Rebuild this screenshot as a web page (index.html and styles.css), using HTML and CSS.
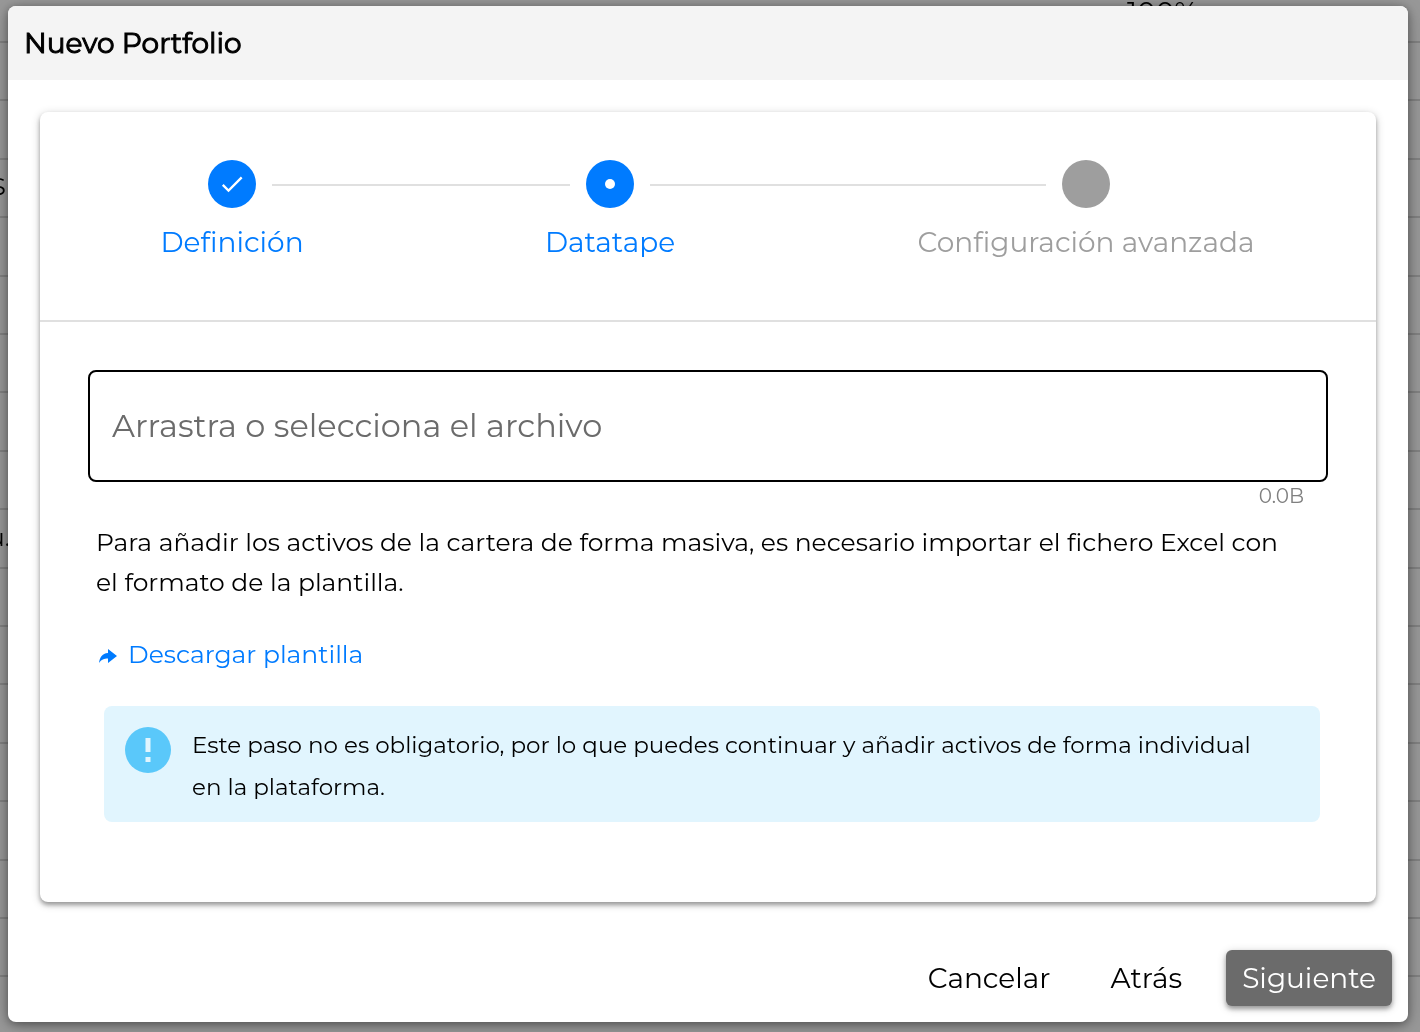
FILE: index.html
```html
<!DOCTYPE html>
<html lang="es">
<head>
  <meta charset="utf-8">
  <meta name="viewport" content="width=device-width, initial-scale=1">
  <title>Nuevo Portfolio</title>
  <link rel="stylesheet" href="styles.css">
</head>
<body>
  <div class="page-behind" aria-hidden="true">
    <table class="grid-table">
      <tbody>
        <tr><td></td><td class="percent">100%</td></tr>
        <tr><td></td><td></td></tr>
        <tr><td></td><td></td></tr>
        <tr><td class="cut"><span>S</span></td><td></td></tr>
        <tr><td></td><td></td></tr>
        <tr><td></td><td></td></tr>
        <tr><td></td><td></td></tr>
        <tr><td></td><td></td></tr>
        <tr><td></td><td></td></tr>
        <tr><td class="cut cut-wide"><span>u.</span></td><td></td></tr>
        <tr><td></td><td></td></tr>
        <tr><td></td><td></td></tr>
        <tr><td></td><td></td></tr>
        <tr><td></td><td></td></tr>
        <tr><td></td><td></td></tr>
        <tr><td></td><td></td></tr>
        <tr><td></td><td></td></tr>
      </tbody>
    </table>
  </div>

  <main class="dialog" role="dialog" aria-labelledby="dialog-title">
    <header class="dialog-header">
      <h1 class="dialog-title" id="dialog-title">Nuevo Portfolio</h1>
    </header>

    <section class="card">
      <ol class="stepper">
        <li class="step step-first step-done">
          <div class="step-track">
            <span class="step-dot">
              <svg width="28" height="28" viewBox="0 0 24 24" fill="currentColor" aria-hidden="true"><path d="M9 16.2 4.800 12l-1.400 1.400L9 19 21 7l-1.400-1.400z"/></svg>
            </span>
          </div>
          <span class="step-label">Definición</span>
        </li>
        <li class="step step-second step-active" aria-current="step">
          <div class="step-track">
            <span class="step-dot">
              <svg width="24" height="24" viewBox="0 0 24 24" fill="currentColor" aria-hidden="true"><circle cx="12" cy="12" r="5"/></svg>
            </span>
          </div>
          <span class="step-label">Datatape</span>
        </li>
        <li class="step step-third">
          <div class="step-track"><span class="step-dot"></span></div>
          <span class="step-label">Configuración avanzada</span>
        </li>
      </ol>

      <div class="card-body">
        <label class="dropzone">
          <span class="dropzone-text">Arrastra o selecciona el archivo</span>
          <input class="dropzone-input" type="file">
        </label>
        <p class="counter">0.0B</p>
        <p class="intro">Para añadir los activos de la cartera de forma masiva, es necesario importar el fichero Excel con el formato de la plantilla.</p>
        <a class="download" href="#">
          <svg class="download-icon" width="24" height="24" viewBox="0 0 24 24" fill="currentColor" aria-hidden="true"><path d="M12 7v4C6 11.500 3.500 16 3 21c2.500-3.500 5-4.500 9-4.500V21l9-7z"/></svg>
          <span>Descargar plantilla</span>
        </a>
        <div class="notice">
          <svg class="notice-icon" width="48" height="48" viewBox="0 0 48 48" aria-hidden="true">
            <circle cx="24" cy="24" r="23" fill="#5ac8fa"/>
            <path d="M21.500 12h5v14h-5zM21.500 31h5v5h-5z" fill="#e1f5fe"/>
          </svg>
          <p class="notice-text">Este paso no es obligatorio, por lo que puedes continuar y añadir activos de forma individual en la plataforma.</p>
        </div>
      </div>
    </section>

    <footer class="actions">
      <button class="button" type="button">Cancelar</button>
      <button class="button" type="button">Atrás</button>
      <button class="button button-primary" type="button">Siguiente</button>
    </footer>
  </main>
</body>
</html>
```
FILE: styles.css
```css
* {
  box-sizing: border-box;
}

body {
  margin: 0;
  min-height: 100vh;
  padding: 6px 12px 10px 8px;
  background: #999;
  color: #000;
  font-family: Montserrat, Inter, sans-serif;
  font-size: 25px;
}

h1,
p,
ol {
  margin: 0;
  padding: 0;
}

/* Table of portfolios that stays behind the dialog */
.page-behind {
  position: fixed;
  inset: 0;
  overflow: hidden;
}

.grid-table {
  width: 100%;
  border-collapse: collapse;
  table-layout: fixed;
  line-height: 32px;
}

.grid-table td {
  height: 58px;
  padding: 0 0 4px;
  border-bottom: 2px solid #828282;
}

.grid-table tr:nth-child(5n) td,
.grid-table tr:nth-child(5n + 3) td {
  height: 59px;
}

.grid-table tr:first-child td {
  height: 42px;
}

.grid-table .percent {
  padding-left: 417px;
  vertical-align: top;
  font-size: 28px;
  line-height: 24px;
}

.cut span {
  display: flex;
  justify-content: flex-end;
  width: 6px;
}

.cut-wide span {
  width: 10px;
}

.dialog {
  position: relative;
  min-height: calc(100vh - 16px);
  overflow: hidden;
  border-radius: 8px;
  background: #fff;
  box-shadow: 0 2px 10px rgba(0, 0, 0, 0.4), 0 4px 24px rgba(0, 0, 0, 0.2);
}

.dialog-header {
  padding: 17px 16px;
  background: #f4f4f4;
}

.dialog-title {
  font-size: 28px;
  font-weight: 400;
  line-height: 40px;
  -webkit-text-stroke: 1px currentColor;
}

.card {
  margin: 32px 32px 0;
  border-radius: 8px;
  box-shadow: 0 2px 10px rgba(0, 0, 0, 0.2), 0 3px 4px rgba(0, 0, 0, 0.3);
}

.stepper {
  display: flex;
  overflow: hidden;
  padding: 48px 0;
  border-bottom: 2px solid #e0e0e0;
  list-style: none;
}

.step {
  min-width: 0;
  color: #9e9e9e;
  text-align: center;
}

.step-first {
  flex: 384 1 0;
}

.step-second {
  flex: 372 1 0;
}

.step-third {
  flex: 580 1 0;
}

.step-done,
.step-active {
  color: #007bff;
}

.step-track {
  display: flex;
  align-items: center;
  gap: 16px;
}

.step-track::before,
.step-track::after {
  content: "";
  flex: 1;
  height: 2px;
  margin-top: 2px;
  background: #e0e0e0;
}

.step:first-child .step-track::before,
.step:last-child .step-track::after {
  background: none;
}

.step-dot {
  display: flex;
  align-items: center;
  justify-content: center;
  width: 48px;
  height: 48px;
  border-radius: 50%;
  background: currentColor;
}

.step-dot svg {
  color: #fff;
}

.step-label {
  display: block;
  padding: 14px 0 10px;
  font-size: 28px;
  line-height: 40px;
}

.card-body {
  padding: 48px 48px 80px;
}

.dropzone {
  position: relative;
  display: flex;
  align-items: center;
  height: 112px;
  padding: 0 22px 2px;
  border: 2px solid #000;
  border-radius: 8px;
  color: #6b6b6b;
  font-size: 32px;
}

.dropzone-input {
  position: absolute;
  inset: 0;
  width: 100%;
  opacity: 0;
  cursor: pointer;
}

.counter {
  padding: 4px 24px 0;
  color: #808080;
  font-size: 20px;
  line-height: 20px;
  text-align: right;
}

.intro {
  padding: 16px 32px 0 8px;
  line-height: 40px;
}

.download {
  display: inline-flex;
  align-items: center;
  gap: 8px;
  margin: 32px 8px;
  color: #007bff;
  line-height: 40px;
  text-decoration: none;
}

.notice {
  display: flex;
  gap: 20px;
  margin: 0 8px 0 16px;
  padding: 18px 40px 14px 20px;
  border-radius: 8px;
  background: #e1f5fe;
}

.notice-icon {
  flex: none;
  margin-top: 2px;
}

.notice-text {
  font-size: 23px;
  line-height: 42px;
}

.actions {
  display: flex;
  justify-content: flex-end;
  gap: 28px;
  padding: 48px 16px 16px;
}

.button {
  height: 56px;
  padding: 0 16px;
  border: 0;
  border-radius: 6px;
  background: none;
  color: #000;
  font-family: inherit;
  font-size: 28px;
}

.button-primary {
  background: #6b6b6b;
  color: #fff;
  box-shadow: 0 2px 10px rgba(0, 0, 0, 0.2), 0 3px 4px rgba(0, 0, 0, 0.3);
}
```
